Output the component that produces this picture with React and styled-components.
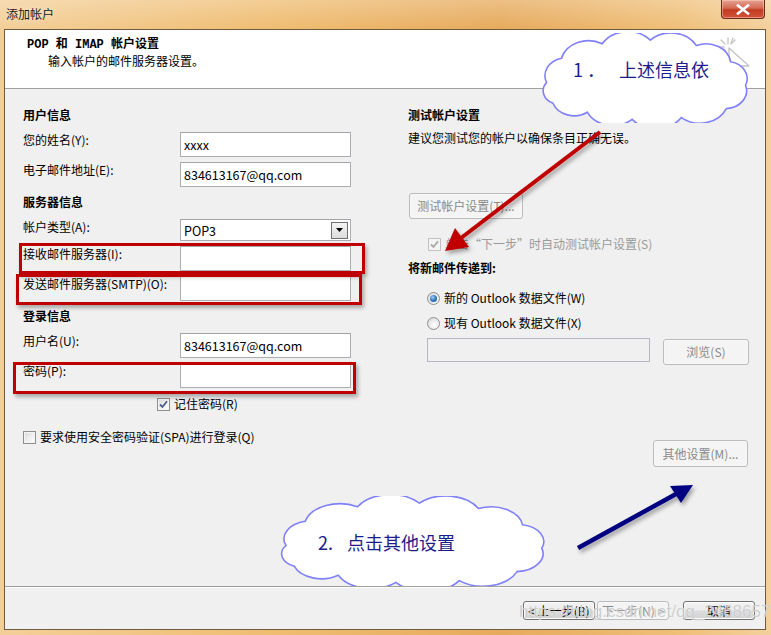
import styled, { createGlobalStyle } from "styled-components";

const GlobalStyle = createGlobalStyle`
  html, body {
    margin: 0;
    padding: 0;
    background: #fff;
  }
  body {
    font-family: "Noto Sans CJK SC", "Noto Sans", sans-serif;
    font-size: 12px;
    color: #000;
  }
  * {
    box-sizing: border-box;
  }
`;

const colors = {
  face: "#f0f0f0",
  line: "#a0a0a0",
  field: "#abadb3",
  disabled: "#9a9a9a",
  annot: "#c00000",
  cloudLine: "#8080f8",
  cloudText: "#1c1c8c",
  navy: "#000080",
};

function CheckMark({ color }) {
  return (
    <svg width="9" height="9" viewBox="0 0 9 9">
      <path d="M1 4.5 L3.5 7 L8 1.2" fill="none" stroke={color} strokeWidth="1.8" />
    </svg>
  );
}

function CloudShape() {
  return (
    <CloudSvg viewBox="0 0 200 100" preserveAspectRatio="none">
      <path
        d="M8 55 A20 20 0 0 1 22 28 A26 26 0 0 1 60 12 A28 28 0 0 1 105 8
           A27 27 0 0 1 148 14 A23 23 0 0 1 180 32 A19 19 0 0 1 194 58
           A20 20 0 0 1 176 84 A27 27 0 0 1 134 94 A29 29 0 0 1 88 96
           A27 27 0 0 1 46 88 A21 21 0 0 1 14 78 A15 15 0 0 1 8 55 Z"
        fill="#fff"
        stroke={colors.cloudLine}
        strokeWidth="1.6"
        vectorEffect="non-scaling-stroke"
      />
    </CloudSvg>
  );
}

function WizardIcon() {
  return (
    <IconSvg width="34" height="36" viewBox="0 0 34 36">
      <g stroke="#c4c4c4" strokeWidth="1.3" strokeLinecap="round">
        <line x1="10" y1="1" x2="10" y2="7" />
        <line x1="1" y1="10" x2="6" y2="10" />
        <line x1="3" y1="3" x2="7" y2="7" />
        <line x1="17" y1="3" x2="13" y2="7" />
        <line x1="3" y1="17" x2="7" y2="13" />
        <line x1="15" y1="1" x2="13" y2="6" />
        <line x1="1" y1="14" x2="6" y2="12" />
      </g>
      <polygon
        points="11,11 31,29 22,29 25,35 20,35 17,30 11,34"
        fill="#fff"
        stroke="#c4c4c4"
        strokeWidth="1.3"
        strokeLinejoin="round"
      />
    </IconSvg>
  );
}

function Arrows() {
  return (
    <ArrowLayer width="771" height="635" viewBox="0 0 771 635">
      <defs>
        <filter id="sh" x="-20%" y="-20%" width="140%" height="140%">
          <feDropShadow dx="2" dy="3" stdDeviation="2" floodColor="#000" floodOpacity="0.35" />
        </filter>
      </defs>
      <g filter="url(#sh)">
        <line x1="600" y1="132" x2="461" y2="238" stroke="#c00000" strokeWidth="4" />
        <polygon points="445,251 469,247 455,228" fill="#c00000" />
      </g>
      <g filter="url(#sh)">
        <line x1="578" y1="548" x2="676" y2="494" stroke={colors.navy} strokeWidth="4.5" />
        <polygon points="693,485 681,503 670,486" fill={colors.navy} />
      </g>
    </ArrowLayer>
  );
}

export default function App() {
  return (
    <>
      <GlobalStyle />
      <Window>
        <TitleBar>
          <TitleText>添加帐户</TitleText>
          <CloseButton>
            <svg width="14" height="11" viewBox="0 0 14 11">
              <path d="M2 1.5 L12 9.5 M12 1.5 L2 9.5" stroke="#fff" strokeWidth="2.6" strokeLinecap="square" />
            </svg>
          </CloseButton>
        </TitleBar>

        <Client>
          <Header>
            <HeaderText>
              <HeaderTitle>POP 和 IMAP 帐户设置</HeaderTitle>
              <HeaderSub>输入帐户的邮件服务器设置。</HeaderSub>
            </HeaderText>
            <WizardIcon />
          </Header>

          <Body>
            <LeftCol>
              <Section>
                <SectionTitle>用户信息</SectionTitle>
                <Rows>
                  <Row>
                    <Label>您的姓名(Y):</Label>
                    <Field>xxxx</Field>
                  </Row>
                  <Row>
                    <Label>电子邮件地址(E):</Label>
                    <Field>834613167@qq.com</Field>
                  </Row>
                </Rows>
              </Section>

              <Section>
                <SectionTitle>服务器信息</SectionTitle>
                <Rows>
                  <Row>
                    <Label>帐户类型(A):</Label>
                    <Select>
                      POP3
                      <DropButton>
                        <svg width="7" height="4" viewBox="0 0 7 4">
                          <path d="M0 0 H7 L3.5 4 Z" fill="#000" />
                        </svg>
                      </DropButton>
                    </Select>
                  </Row>
                  <Row>
                    <Label>接收邮件服务器(I):</Label>
                    <Field />
                  </Row>
                  <Row>
                    <Label>发送邮件服务器(SMTP)(O):</Label>
                    <Field />
                  </Row>
                </Rows>
              </Section>

              <Section>
                <SectionTitle>登录信息</SectionTitle>
                <Rows>
                  <Row>
                    <Label>用户名(U):</Label>
                    <Field>834613167@qq.com</Field>
                  </Row>
                  <Row>
                    <Label>密码(P):</Label>
                    <Field />
                  </Row>
                </Rows>
              </Section>

              <CheckRow $indent={134} $top={8}>
                <CheckBox>
                  <CheckMark color="#4a5f8d" />
                </CheckBox>
                记住密码(R)
              </CheckRow>

              <CheckRow $indent={0} $top={17}>
                <CheckBox />
                要求使用安全密码验证(SPA)进行登录(Q)
              </CheckRow>
            </LeftCol>

            <RightCol>
              <SectionTitle>测试帐户设置</SectionTitle>
              <Desc>建议您测试您的帐户以确保条目正确无误。</Desc>
              <Button $disabled $w={114} $h={26} $left={1} $top={47}>
                测试帐户设置(T)...
              </Button>
              <CheckRow $indent={20} $top={17} $disabled>
                <CheckBox $disabled>
                  <CheckMark color="#a8a8a8" />
                </CheckBox>
                单击“下一步”时自动测试帐户设置(S)
              </CheckRow>
              <SubTitle>将新邮件传递到:</SubTitle>
              <RadioRow $top={14}>
                <Radio $checked />
                新的 Outlook 数据文件(W)
              </RadioRow>
              <RadioRow $top={9}>
                <Radio />
                现有 Outlook 数据文件(X)
              </RadioRow>
              <FileRow>
                <PathField />
                <Button $disabled $w={86} $h={26} $left={0} $top={1}>
                  浏览(S)
                </Button>
              </FileRow>
              <Button $disabled $w={95} $h={27} $left={245} $top={75}>
                其他设置(M)...
              </Button>
            </RightCol>
          </Body>

          <Footer>
            <Button $w={72} $h={19} $left={0} $top={0}>
              &lt; 上一步(B)
            </Button>
            <Button $disabled $w={72} $h={19} $left={2} $top={0}>
              下一步(N) &gt;
            </Button>
            <Button $w={72} $h={19} $left={14} $top={0}>
              取消
            </Button>
          </Footer>
        </Client>

        <Mark $left={19} $top={243} $w={346} $h={31} />
        <Mark $left={16} $top={274} $w={346} $h={31} />
        <Mark $left={13} $top={362} $w={343} $h={32} />

        <Arrows />

        <Cloud $left={538} $top={33} $w={214} $h={90}>
          <CloudShape />
          <CloudText $padLeft={35} $padTop={25}>
            1 ． <span>上述信息依</span>
          </CloudText>
        </Cloud>

        <Cloud $left={275} $top={496} $w={275} $h={90}>
          <CloudShape />
          <CloudText $padLeft={43} $padTop={35}>
            2. <span>点击其他设置</span>
          </CloudText>
        </Cloud>

        <Watermark>https://blog.csdn.net/qq_24686571</Watermark>
      </Window>
    </>
  );
}

const Window = styled.div`
  position: relative;
  width: 771px;
  height: 635px;
  display: flex;
  flex-direction: column;
  overflow: hidden;
  background: linear-gradient(
    90deg,
    #f3cf98 0%,
    #efbd72 35%,
    #e6aa5c 65%,
    #efbf78 88%,
    #f3d09c 100%
  );
`;

const TitleBar = styled.div`
  height: 29px;
  flex-shrink: 0;
  display: flex;
  align-items: flex-start;
  padding-left: 6px;
  padding-right: 6px;
  background: linear-gradient(180deg, rgba(255, 255, 255, 0.25), rgba(255, 255, 255, 0));
`;

const TitleText = styled.div`
  margin-top: 6px;
  line-height: 16px;
  font-size: 12px;
  color: #1a1a1a;
  text-shadow: 0 0 6px rgba(255, 255, 255, 0.7);
`;

const CloseButton = styled.div`
  margin-left: auto;
  width: 44px;
  height: 19px;
  display: flex;
  align-items: center;
  justify-content: center;
  border: 1px solid #6b2a1c;
  border-top: none;
  border-radius: 0 0 4px 4px;
  background: linear-gradient(180deg, #e6a294 0%, #d46a52 45%, #c23c20 55%, #d2533a 100%);
  box-shadow: inset 0 0 0 1px rgba(255, 220, 200, 0.45);
`;

const Client = styled.div`
  flex: 1;
  margin: 0 5px 5px 4px;
  border: 1px solid #6e5a3e;
  background: ${colors.face};
  display: flex;
  flex-direction: column;
`;

const Header = styled.div`
  height: 59px;
  flex-shrink: 0;
  background: #fff;
  border-bottom: 1px solid ${colors.line};
  display: flex;
  align-items: flex-start;
  padding: 7px 13px 0 22px;
`;

const HeaderText = styled.div`
  display: flex;
  flex-direction: column;
`;

const HeaderTitle = styled.div`
  font-family: "Liberation Mono", "Noto Sans CJK SC", monospace;
  font-weight: 700;
  font-size: 12px;
  line-height: 16px;
`;

const HeaderSub = styled.div`
  margin-left: 21px;
  line-height: 16px;
`;

const IconSvg = styled.svg`
  margin-left: auto;
  margin-top: 0;
`;

const Body = styled.div`
  flex: 1;
  display: flex;
  padding: 18px 0 0 18px;
`;

const LeftCol = styled.div`
  width: 330px;
  display: flex;
  flex-direction: column;
`;

const Section = styled.div`
  & + & {
    margin-top: 7px;
  }
`;

const SectionTitle = styled.div`
  font-weight: 700;
  line-height: 16px;
  margin-bottom: 9px;
`;

const Rows = styled.div`
  display: flex;
  flex-direction: column;
  gap: 5px;
`;

const Row = styled.div`
  display: flex;
  align-items: flex-start;
`;

const Label = styled.div`
  width: 157px;
  line-height: 16px;
`;

const Field = styled.div`
  width: 171px;
  height: 25px;
  padding: 0 3px;
  display: flex;
  align-items: center;
  background: #fff;
  border: 1px solid ${colors.field};
  border-top-color: #a2a4aa;
  font-size: 12.5px;
`;

const Select = styled(Field)`
  height: 22px;
  padding-right: 2px;
  justify-content: space-between;
`;

const DropButton = styled.div`
  width: 17px;
  height: 17px;
  display: flex;
  align-items: center;
  justify-content: center;
  border: 1px solid #707070;
  background: linear-gradient(180deg, #f4f4f4, #dcdcdc);
`;

const CheckRow = styled.div`
  display: flex;
  align-items: center;
  gap: 4px;
  line-height: 16px;
  margin-top: ${(p) => p.$top}px;
  margin-left: ${(p) => p.$indent}px;
  color: ${(p) => (p.$disabled ? colors.disabled : "#000")};
`;

const CheckBox = styled.span`
  width: 13px;
  height: 13px;
  display: inline-flex;
  align-items: center;
  justify-content: center;
  border: 1px solid ${(p) => (p.$disabled ? "#c2c2c2" : "#8e8f8f")};
  background: ${(p) =>
    p.$disabled ? "#f4f4f4" : "linear-gradient(135deg, #d8d8d8 0%, #f6f6f6 70%, #fff 100%)"};
  box-shadow: inset 0 0 0 1px #f4f4f4;
`;

const RightCol = styled.div`
  margin-left: 55px;
  width: 342px;
  display: flex;
  flex-direction: column;
  align-items: flex-start;
`;

const Desc = styled.div`
  line-height: 16px;
  margin-top: -2px;
`;

const SubTitle = styled.div`
  font-weight: 700;
  line-height: 16px;
  margin-top: 8px;
`;

const RadioRow = styled.div`
  display: flex;
  align-items: center;
  gap: 4px;
  line-height: 16px;
  margin-left: 19px;
  margin-top: ${(p) => p.$top}px;
`;

const Radio = styled.span`
  position: relative;
  width: 13px;
  height: 13px;
  border-radius: 50%;
  border: 1px solid #8e8f8f;
  background: radial-gradient(circle at 60% 65%, #fff 0%, #e6e6e6 60%, #cfcfcf 100%);
  &::after {
    content: "";
    display: ${(p) => (p.$checked ? "block" : "none")};
    position: absolute;
    left: 2px;
    top: 2px;
    width: 7px;
    height: 7px;
    border-radius: 50%;
    background: radial-gradient(circle at 40% 35%, #9fd0f5 0%, #2b72b8 55%, #1a4f8c 100%);
  }
`;

const FileRow = styled.div`
  display: flex;
  align-items: flex-start;
  gap: 13px;
  margin-left: 19px;
  margin-top: 7px;
`;

const PathField = styled.div`
  width: 223px;
  height: 24px;
  background: ${colors.face};
  border: 1px solid #b5b8c0;
`;

const Button = styled.div`
  width: ${(p) => p.$w}px;
  height: ${(p) => p.$h}px;
  margin-left: ${(p) => p.$left}px;
  margin-top: ${(p) => p.$top}px;
  display: flex;
  align-items: center;
  justify-content: center;
  flex-shrink: 0;
  border-radius: 3px;
  border: 1px solid ${(p) => (p.$disabled ? "#b8bcbf" : "#707070")};
  color: ${(p) => (p.$disabled ? "#8a8a8a" : "#000")};
  background: ${(p) =>
    p.$disabled
      ? "#f4f4f4"
      : "linear-gradient(180deg, #f3f3f3 0%, #ececec 48%, #dddddd 52%, #d2d2d2 100%)"};
  box-shadow: inset 0 0 0 1px ${(p) => (p.$disabled ? "#f8f8f8" : "#fcfcfc")};
  line-height: 16px;
  white-space: nowrap;
`;

const Footer = styled.div`
  height: 43px;
  flex-shrink: 0;
  display: flex;
  align-items: flex-start;
  justify-content: flex-end;
  padding: 14px 10px 0 0;
  border-top: 1px solid ${colors.line};
  box-shadow: inset 0 1px 0 #fff;
`;

const Mark = styled.div`
  position: absolute;
  left: ${(p) => p.$left}px;
  top: ${(p) => p.$top}px;
  width: ${(p) => p.$w}px;
  height: ${(p) => p.$h}px;
  border: 3px solid ${colors.annot};
  box-shadow: 2px 3px 4px rgba(0, 0, 0, 0.3);
  pointer-events: none;
`;

const ArrowLayer = styled.svg`
  position: absolute;
  left: 0;
  top: 0;
  pointer-events: none;
`;

const Cloud = styled.div`
  position: absolute;
  left: ${(p) => p.$left}px;
  top: ${(p) => p.$top}px;
  width: ${(p) => p.$w}px;
  height: ${(p) => p.$h}px;
`;

const CloudSvg = styled.svg`
  position: absolute;
  inset: 0;
  width: 100%;
  height: 100%;
`;

const CloudText = styled.div`
  position: relative;
  padding-left: ${(p) => p.$padLeft}px;
  padding-top: ${(p) => p.$padTop}px;
  font-size: 18px;
  line-height: 22px;
  color: ${colors.cloudText};
  white-space: pre;
  & > span {
    margin-left: 10px;
  }
`;

const Watermark = styled.div`
  position: absolute;
  left: 519px;
  top: 601px;
  font-family: "Liberation Sans", sans-serif;
  font-size: 17px;
  line-height: 22px;
  color: rgba(190, 190, 190, 0.75);
  text-shadow: 0 0 1px rgba(255, 255, 255, 0.9);
  pointer-events: none;
  white-space: nowrap;
`;
